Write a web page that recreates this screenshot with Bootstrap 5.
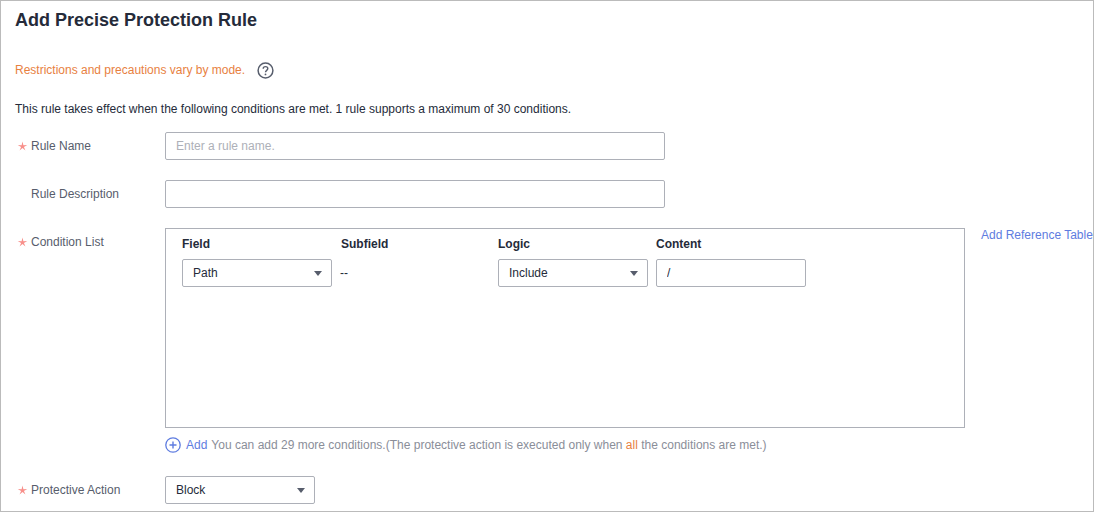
<!DOCTYPE html>
<html lang="en">
<head>
  <meta charset="UTF-8">
  <title>Add Precise Protection Rule</title>
  <meta name="viewport" content="width=device-width, initial-scale=1">
  <link href="https://cdn.jsdelivr.net/npm/bootstrap@5.3.0/dist/css/bootstrap.min.css" rel="stylesheet" />
  <style>
    html, body {
      height: 512px;
      overflow: hidden;
    }
    body {
      font-family: "Liberation Sans", Arial, sans-serif;
      font-size: 12px;
      line-height: 16px;
      color: #252b3a;
      background: #fff;
    }
    .page-frame {
      height: 512px;
      border: 1px solid #bbb;
      padding: 0 0 0 14px;
      overflow: hidden;
    }
    .page-title {
      font-size: 18px;
      line-height: 24px;
      font-weight: 700;
      margin: 7px 0 0;
      color: #252b3a;
    }
    .mode-note {
      height: 20px;
      margin-top: 28px;
      color: #e8813f;
    }
    .help-icon {
      margin-left: 12px;
    }
    .intro-text {
      margin: 21px 0 0;
      color: #252b3a;
    }
    .rule-row {
      display: flex;
      margin-top: 20px;
    }
    .first-row {
      margin-top: 15px;
    }
    .rule-label {
      flex: 0 0 150px;
      height: 28px;
      padding-left: 16px;
      line-height: 28px;
      color: #575d6c;
      position: relative;
    }
    .req-star {
      position: absolute;
      left: 2px;
      top: 9px;
    }
    .text-box, .select-box {
      height: 28px;
      border: 1px solid #adb0b8;
      border-radius: 2px;
      background: #fff;
      font-size: 12px;
      color: #252b3a;
      padding: 0 10px;
    }
    .text-box::placeholder {
      color: #adb0b8;
      opacity: 1;
    }
    .select-box {
      display: flex;
      align-items: center;
      justify-content: space-between;
    }
    .select-caret {
      width: 0;
      height: 0;
      border-left: 4.5px solid transparent;
      border-right: 4.5px solid transparent;
      border-top: 5px solid #575d6c;
      margin-right: -1px;
    }
    .w-name { width: 500px; }
    .w-pick { width: 150px; }
    .cond-box {
      width: 800px;
      height: 200px;
      border: 1px solid #adb0b8;
      padding: 7px 16px;
    }
    .cond-cols {
      display: grid;
      grid-template-columns: repeat(4, 150px);
      column-gap: 8px;
    }
    .cond-head {
      font-weight: 700;
      line-height: 16px;
      margin-bottom: 7px;
    }
    .cond-shift {
      padding-left: 1px;
    }
    .cond-dash {
      line-height: 28px;
      color: #252b3a;
    }
    .ref-link {
      margin-left: 16px;
      line-height: 14px;
      white-space: nowrap;
      color: #5e7ce0;
      text-decoration: none;
    }
    .add-line {
      margin: 9px 0 0 150px;
      height: 16px;
      color: #8a8e99;
    }
    .add-link {
      color: #5e7ce0;
      text-decoration: none;
      margin: 0 4px 0 5px;
    }
    .all-word {
      color: #e8813f;
    }
    .action-row {
      margin-top: 23px;
    }
  </style>
</head>

<body>
<div class="page-frame">
  <h1 class="page-title">Add Precise Protection Rule</h1>

  <div class="mode-note d-flex align-items-center">
    <span>Restrictions and precautions vary by mode.</span>
    <svg class="help-icon" width="17" height="17" viewBox="0 0 17 17" fill="none">
      <circle cx="8.5" cy="8.5" r="7.4" stroke="#575d6c" stroke-width="1.5"/>
      <path d="M6.2 6.7c0-1.3 1-2.1 2.3-2.1s2.3.8 2.3 2c0 1.7-2.3 1.8-2.3 3.6" stroke="#575d6c" stroke-width="1.4"/>
      <circle cx="8.5" cy="12.4" r=".9" fill="#575d6c"/>
    </svg>
  </div>

  <p class="intro-text">This rule takes effect when the following conditions are met. 1 rule supports a maximum of 30 conditions.</p>

  <div class="rule-row first-row">
    <div class="rule-label">
      <svg class="req-star" width="11" height="11" viewBox="0 0 11 11"><path d="M5.5.5l.88 3.79 3.88-.34-3.33 2.01 1.51 3.59L5.5 7 2.56 9.55l1.51-3.59L.74 3.95l3.88.34z" fill="#f8908b"/></svg>
      Rule Name
    </div>
    <input class="text-box w-name" type="text" placeholder="Enter a rule name.">
  </div>

  <div class="rule-row">
    <div class="rule-label">Rule Description</div>
    <input class="text-box w-name" type="text">
  </div>

  <div class="rule-row">
    <div class="rule-label">
      <svg class="req-star" width="11" height="11" viewBox="0 0 11 11"><path d="M5.5.5l.88 3.79 3.88-.34-3.33 2.01 1.51 3.59L5.5 7 2.56 9.55l1.51-3.59L.74 3.95l3.88.34z" fill="#f8908b"/></svg>
      Condition List
    </div>
    <div class="cond-box">
      <div class="cond-cols">
        <div class="cond-head">Field</div>
        <div class="cond-head cond-shift">Subfield</div>
        <div class="cond-head">Logic</div>
        <div class="cond-head">Content</div>
        <div class="select-box"><span>Path</span><span class="select-caret"></span></div>
        <div class="cond-dash">--</div>
        <div class="select-box"><span>Include</span><span class="select-caret"></span></div>
        <input class="text-box" type="text" value="/">
      </div>
    </div>
    <a class="ref-link" href="#">Add Reference Table</a>
  </div>

  <div class="add-line d-flex align-items-center">
    <svg width="16" height="16" viewBox="0 0 16 16" fill="none">
      <circle cx="8" cy="8" r="7.2" stroke="#5e7ce0" stroke-width="1.3"/>
      <path d="M8 4.5v7M4.5 8h7" stroke="#5e7ce0" stroke-width="1.4"/>
    </svg>
    <a class="add-link" href="#">Add</a>
    <span>You can add 29 more conditions.(The protective action is executed only when <span class="all-word">all</span> the conditions are met.)</span>
  </div>

  <div class="rule-row action-row">
    <div class="rule-label">
      <svg class="req-star" width="11" height="11" viewBox="0 0 11 11"><path d="M5.5.5l.88 3.79 3.88-.34-3.33 2.01 1.51 3.59L5.5 7 2.56 9.55l1.51-3.59L.74 3.95l3.88.34z" fill="#f8908b"/></svg>
      Protective Action
    </div>
    <div class="select-box w-pick"><span>Block</span><span class="select-caret"></span></div>
  </div>
</div>

<script src="https://cdn.jsdelivr.net/npm/bootstrap@5.3.0/dist/js/bootstrap.bundle.min.js"></script>
</body>
</html>
